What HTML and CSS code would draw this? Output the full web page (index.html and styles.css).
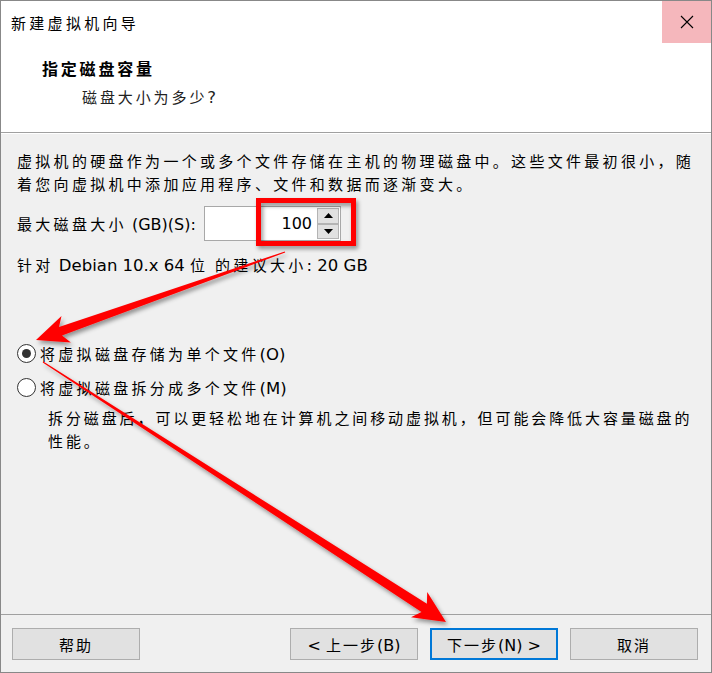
FILE: index.html
```html
<!DOCTYPE html>
<html lang="zh-CN">
<head>
  <meta charset="UTF-8">
  <title>新建虚拟机向导</title>
  <link rel="stylesheet" href="styles.css">
</head>
<body>
  <div class="window">
    <div class="titlebar">
      <span class="title">新建虚拟机向导</span>
      <div class="close">
        <svg width="14" height="14" viewBox="0 0 14 14">
          <path d="M1 1 L13 13 M13 1 L1 13" stroke="#000" stroke-width="1.1" fill="none"/>
        </svg>
      </div>
    </div>

    <div class="header">
      <div class="step-title">指定磁盘容量</div>
      <div class="step-sub">磁盘大小为多少<span class="en">?</span></div>
    </div>

    <div class="content">
      <p class="intro">虚拟机的硬盘作为一个或多个文件存储在主机的物理磁盘中。这些文件最初很小，随<br>着您向虚拟机中添加应用程序、文件和数据而逐渐变大。</p>

      <div class="size-row">
        <label for="diskSize">最大磁盘大小<span class="en"> (GB)(S):</span></label>
        <div class="spin">
          <input type="text" id="diskSize" class="spin-input" value="100">
          <div class="spin-btns">
            <div class="spin-btn">
              <svg width="9" height="5" viewBox="0 0 9 5"><polygon points="4.5,0 9,5 0,5" fill="#000"/></svg>
            </div>
            <div class="spin-btn">
              <svg width="9" height="5" viewBox="0 0 9 5"><polygon points="0,0 9,0 4.5,5" fill="#000"/></svg>
            </div>
          </div>
        </div>
      </div>

      <p class="hint">针对<span class="en"> Debian 10.x 64 </span>位 的建议大小<span class="en">: 20 GB</span></p>

      <div class="options">
        <div class="radio">
          <span class="radio-dot checked"></span>
          <span>将虚拟磁盘存储为单个文件<span class="en">(O)</span></span>
        </div>
        <div class="radio">
          <span class="radio-dot"></span>
          <span>将虚拟磁盘拆分成多个文件<span class="en">(M)</span></span>
        </div>
        <p class="desc">拆分磁盘后，可以更轻松地在计算机之间移动虚拟机，但可能会降低大容量磁盘的<br>性能。</p>
      </div>
    </div>

    <div class="footer">
      <button class="btn">帮助</button>
      <div class="spacer"></div>
      <button class="btn"><span class="en">&lt; </span>上一步<span class="en">(B)</span></button>
      <button class="btn primary">下一步<span class="en">(N) &gt;</span></button>
      <button class="btn">取消</button>
    </div>

    <!-- annotation marks drawn over the dialog -->
    <svg class="marks" width="712" height="673" viewBox="0 0 712 673">
      <defs>
        <filter id="shadow" x="-20%" y="-20%" width="140%" height="140%">
          <feDropShadow dx="2" dy="3" stdDeviation="2" flood-color="#000" flood-opacity="0.4"/>
        </filter>
      </defs>
      <rect x="258.5" y="200.5" width="95" height="43" fill="none" stroke="#ff0000" stroke-width="5" filter="url(#shadow)"/>
      <polygon points="284.8,251.5 59,327.1 61.5,316.1 36,340 70.9,342.5 62,335.5 285.2,252.5" fill="#ff0000" filter="url(#shadow)"/>
      <polygon points="42.7,362.4 421.5,612.1 411,617.3 446,622 427.2,592.1 426.9,603.7 43.3,361.6" fill="#ff0000" filter="url(#shadow)"/>
    </svg>
  </div>
</body>
</html>
```

FILE: styles.css
```css
body {
  margin: 0;
  font-family: "Noto Sans CJK SC", sans-serif;
  color: #000;
}
.window {
  position: relative;
  width: 712px;
  height: 673px;
  box-sizing: border-box;
  border: 1px solid #888;
  background: #f0f0f0;
  display: flex;
  flex-direction: column;
}
.en {
  font-family: "DejaVu Sans", sans-serif;
  font-size: 16.5px;
  letter-spacing: 0;
}
.titlebar {
  height: 42px;
  background: white;
  display: flex;
  align-items: center;
}
.title {
  flex: 1;
  padding-left: 10px;
  font-size: 15px;
  letter-spacing: 3.3px;
}
.close {
  width: 49px;
  height: 42px;
  background: #f5b7bc;
  display: flex;
  align-items: center;
  justify-content: center;
}
.header {
  background: white;
  height: 90px;
  box-sizing: border-box;
  padding: 14px 0 0 41px;
  border-bottom: 1px solid #a0a0a0;
}
.step-title {
  font-size: 16px;
  font-weight: bold;
  letter-spacing: 2.8px;
  line-height: 22px;
}
.step-sub {
  margin-top: 7px;
  padding-left: 40px;
  font-size: 15px;
  letter-spacing: 2.9px;
  line-height: 22px;
  color: #222;
}
.content {
  flex: 1;
  border-top: 1px solid #fff;
  padding: 15px 0 0 16px;
  font-size: 15px;
  letter-spacing: 3.3px;
  white-space: nowrap;
}
.intro, .hint, .desc {
  margin: 0;
  line-height: 23px;
}
.size-row {
  margin-top: 11px;
  display: flex;
  align-items: center;
  height: 35px;
}
.size-row label {
  width: 187px;
}
.size-row .en {
  font-size: 16px;
}
.spin {
  display: flex;
  width: 137px;
  height: 35px;
  box-sizing: border-box;
  border: 1px solid #a8a8a8;
  background: white;
}
.spin-input {
  flex: 1;
  min-width: 0;
  border: none;
  outline: none;
  padding: 0 5px 0 0;
  text-align: right;
  font-family: "DejaVu Sans", sans-serif;
  font-size: 16px;
  background: white;
}
.spin-btns {
  width: 22px;
  display: flex;
  flex-direction: column;
  padding: 1px 1px 1px 0;
}
.spin-btn {
  flex: 1;
  background: #e1e1e1;
  border: 1px solid #b4b4b4;
  display: flex;
  align-items: center;
  justify-content: center;
}
.hint {
  margin-top: 12px;
}
.options {
  margin-top: 64px;
}
.radio {
  display: flex;
  align-items: center;
  height: 24px;
  gap: 4px;
}
.radio + .radio {
  margin-top: 10px;
}
.radio-dot {
  width: 19px;
  height: 19px;
  box-sizing: border-box;
  border: 1.5px solid #333;
  border-radius: 50%;
  background: white;
  display: flex;
  align-items: center;
  justify-content: center;
}
.radio-dot.checked::after {
  content: "";
  width: 9px;
  height: 9px;
  border-radius: 50%;
  background: #333;
}
.desc {
  margin-top: 7px;
  padding-left: 31px;
  letter-spacing: 2.9px;
}
.footer {
  height: 58px;
  box-sizing: border-box;
  border-top: 1px solid #a0a0a0;
  padding: 13px 13px 0 11px;
  display: flex;
  gap: 12px;
}
.spacer {
  flex: 1;
}
.btn {
  width: 128px;
  height: 32px;
  background: #e1e1e1;
  border: 1px solid #adadad;
  font-family: "Noto Sans CJK SC", sans-serif;
  font-size: 15px;
  letter-spacing: 2px;
  color: #000;
  padding: 0;
}
.btn .en {
  font-size: 16px;
}
.btn.primary {
  border: 2px solid #0078d7;
}
.marks {
  position: absolute;
  left: -1px;
  top: -1px;
  pointer-events: none;
}
```
